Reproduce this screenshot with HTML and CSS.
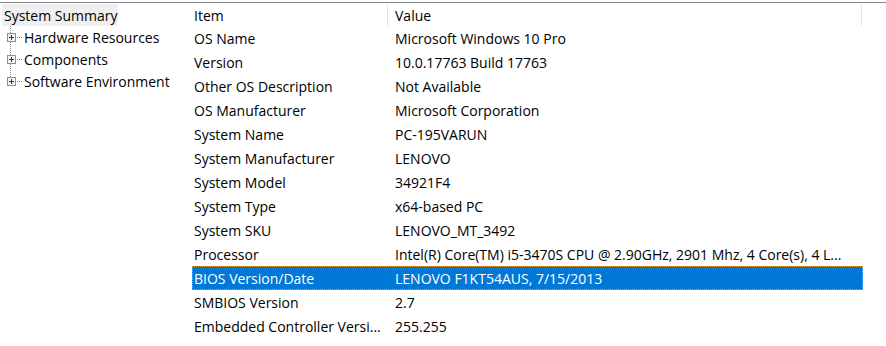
FILE: index.html
```html
<!DOCTYPE html>
<html>
<head>
<meta charset="utf-8">
<link rel="stylesheet" href="styles.css">
</head>
<body>
<div class="window">
  <div class="tree">
    <div class="tree-root"><span class="root-label">System Summary</span></div>
    <div class="tree-children">
      <div class="tree-item"><span class="expander"><svg width="9" height="9" viewBox="0 0 9 9"><rect x="0.5" y="0.5" width="8" height="8" fill="#f4f4f4" stroke="#8e8f8f"/><path d="M2 4.5h5M4.5 2v5" stroke="#1f3a70" stroke-width="1"/></svg></span><span class="dots"></span><span class="label">Hardware Resources</span></div>
      <div class="tree-item"><span class="expander"><svg width="9" height="9" viewBox="0 0 9 9"><rect x="0.5" y="0.5" width="8" height="8" fill="#f4f4f4" stroke="#8e8f8f"/><path d="M2 4.5h5M4.5 2v5" stroke="#1f3a70" stroke-width="1"/></svg></span><span class="dots"></span><span class="label">Components</span></div>
      <div class="tree-item"><span class="expander"><svg width="9" height="9" viewBox="0 0 9 9"><rect x="0.5" y="0.5" width="8" height="8" fill="#f4f4f4" stroke="#8e8f8f"/><path d="M2 4.5h5M4.5 2v5" stroke="#1f3a70" stroke-width="1"/></svg></span><span class="dots"></span><span class="label">Software Environment</span></div>
    </div>
  </div>
  <div class="list">
    <div class="header">
      <div class="hcell item">Item</div>
      <div class="hcell value">Value</div>
      <div class="hcell rest"></div>
    </div>
    <div class="row"><div class="cell item">OS Name</div><div class="cell value">Microsoft Windows 10 Pro</div></div>
    <div class="row"><div class="cell item">Version</div><div class="cell value">10.0.17763 Build 17763</div></div>
    <div class="row"><div class="cell item">Other OS Description</div><div class="cell value">Not Available</div></div>
    <div class="row"><div class="cell item">OS Manufacturer</div><div class="cell value">Microsoft Corporation</div></div>
    <div class="row"><div class="cell item">System Name</div><div class="cell value">PC-195VARUN</div></div>
    <div class="row"><div class="cell item">System Manufacturer</div><div class="cell value">LENOVO</div></div>
    <div class="row"><div class="cell item">System Model</div><div class="cell value">34921F4</div></div>
    <div class="row"><div class="cell item">System Type</div><div class="cell value">x64-based PC</div></div>
    <div class="row"><div class="cell item">System SKU</div><div class="cell value">LENOVO_MT_3492</div></div>
    <div class="row"><div class="cell item">Processor</div><div class="cell value">Intel(R) Core(TM) i5-3470S CPU @ 2.90GHz, 2901 Mhz, 4 Core(s), 4 L...</div></div>
    <div class="row selected"><div class="cell item">BIOS Version/Date</div><div class="cell value">LENOVO F1KT54AUS, 7/15/2013</div></div>
    <div class="row"><div class="cell item">SMBIOS Version</div><div class="cell value">2.7</div></div>
    <div class="row"><div class="cell item">Embedded Controller Versi...</div><div class="cell value">255.255</div></div>
  </div>
</div>
</body>
</html>
```
FILE: styles.css
```css
html, body {
  margin: 0;
  padding: 0;
  background: #ffffff;
}
body {
  font-family: "Open Sans", "Noto Sans", sans-serif;
  font-size: 14px;
  color: #000;
  width: 886px;
  height: 346px;
  overflow: hidden;
}
.window {
  margin-top: 2px;
  border-top: 1px solid #878c92;
  display: flex;
  height: 343px;
}
.tree {
  width: 192px;
  flex: none;
  padding-top: 1px;
}
.tree-root {
  height: 22px;
  padding-left: 2px;
  display: flex;
}
.root-label {
  background: #efefef;
  padding: 1px 2px 0;
  width: 112px;
  line-height: 21px;
  white-space: nowrap;
}
.tree-children {
  position: relative;
}
.tree-children::before {
  content: "";
  position: absolute;
  left: 10px;
  top: 0;
  height: 57px;
  border-left: 1px dotted #8a8a8a;
}
.tree-item {
  height: 22px;
  display: flex;
  align-items: center;
  padding-left: 7px;
  white-space: nowrap;
}
.expander {
  width: 9px;
  height: 9px;
  display: block;
  position: relative;
  z-index: 1;
  background: #fff;
}
.expander svg {
  display: block;
}
.dots {
  width: 5px;
  margin: 0 2px 0 1px;
  border-top: 1px dotted #8a8a8a;
}
.label {
  line-height: 20px;
  padding-top: 2px;
}
.list {
  flex: none;
  width: 671px;
  padding-top: 1px;
}
.header {
  display: flex;
  height: 22px;
  align-items: stretch;
}
.hcell {
  line-height: 21px;
  padding-top: 1px;
  white-space: nowrap;
}
.hcell.item {
  width: 193px;
  padding-left: 2px;
  border-right: 1px solid #e5e5e5;
}
.hcell.value {
  width: 466px;
  padding-left: 7px;
  border-right: 1px solid #e5e5e5;
}
.row {
  display: flex;
  height: 24px;
  align-items: flex-start;
}
.cell {
  line-height: 23px;
  padding-top: 1px;
  white-space: nowrap;
  overflow: hidden;
  text-overflow: ellipsis;
}
.cell.item {
  width: 189px;
  padding-left: 2px;
  padding-right: 4px;
}
.cell.value {
  width: 460px;
  padding-left: 8px;
  padding-right: 8px;
}
.row.selected {
  background: #0078d7;
  color: #fff;
  outline: 1px dotted #f19a2e;
  outline-offset: -1px;
}
```
